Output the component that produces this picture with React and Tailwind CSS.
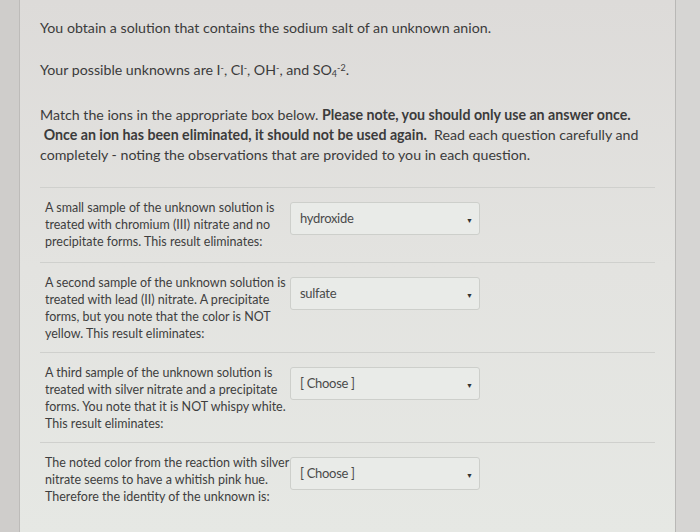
export default function App() {
  const rows = [
    {
      lines: ["A small sample of the unknown solution is", "treated with chromium (III) nitrate and no", "precipitate forms. This result eliminates:"],
      value: "hydroxide",
      h: "h-[75px]",
    },
    {
      lines: ["A second sample of the unknown solution is", "treated with lead (II) nitrate. A precipitate", "forms, but you note that the color is NOT", "yellow. This result eliminates:"],
      value: "sulfate",
      h: "h-[90px]",
    },
    {
      lines: ["A third sample of the unknown solution is", "treated with silver nitrate and a precipitate", "forms. You note that it is NOT whispy white.", "This result eliminates:"],
      value: "[ Choose ]",
      h: "h-[90px]",
    },
    {
      lines: ["The noted color from the reaction with silver", "nitrate seems to have a whitish pink hue.", "Therefore the identity of the unknown is:"],
      value: "[ Choose ]",
      h: "h-[90px]",
    },
  ];
  return (
    <div className="w-[700px] h-[532px] overflow-hidden flex bg-gradient-to-b from-[#dddbd9] via-[#e3e3e0] to-[#e6e8e4] text-[#3b3b3b]" style={{ fontFamily: "Lato, 'Open Sans', sans-serif" }}>
      <div className="w-[20px] shrink-0 bg-[#cfcdcb] border-r border-[#bdbbb9]" />
      <div className="flex-1 pl-[20px] pr-[20px]">
        <div className="pt-[18px] text-[14.2px] leading-[20px]">
          <p>You obtain a solution that contains the sodium salt of an unknown anion.</p>
          <p className="mt-[22px]">
            Your possible unknowns are I<sup className="text-[9px]">-</sup>, Cl<sup className="text-[9px]">-</sup>, OH<sup className="text-[9px]">-</sup>, and SO<sub className="text-[9px]">4</sub><sup className="text-[9px]">-2</sup>.
          </p>
          <p className="mt-[25px]">
            Match the ions in the appropriate box below. <b>Please note, you should only use an answer once.</b>
            <br />
            &nbsp;<b>Once an ion has been eliminated, it should not be used again.</b>&nbsp; Read each question carefully and
            <br />
            completely - noting the observations that are provided to you in each question.
          </p>
        </div>
        <div className="mt-[22px]">
          {rows.map((r, i) => (
            <div key={i} className={`border-t border-[#cfd0cd] flex ${r.h}`}>
              <div className="w-[250px] pl-[5px] pt-[11px] text-[12.5px] leading-[17px] text-[#3e3e3e]">
                {r.lines.map((l, j) => (
                  <div key={j} className="whitespace-nowrap">{l}</div>
                ))}
              </div>
              <div className="mt-[14px] w-[190px] h-[33px] border border-[#cdcfcb] rounded-[3px] bg-[#e9ebe8] flex items-start justify-between pl-[9px] pr-[6px] pt-[6px] text-[13px] text-[#4a4a4a]">
                <span className="tracking-[-0.3px]">{r.value}</span>
                <span className="text-[7px] mt-[6px] text-[#333]">▼</span>
              </div>
            </div>
          ))}
        </div>
      </div>
      <div className="w-[25px] shrink-0 bg-[#d6d5d3] border-l border-[#b9b8b6]" />
    </div>
  );
}
